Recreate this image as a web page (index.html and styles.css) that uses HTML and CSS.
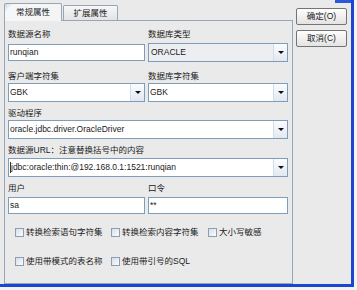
FILE: index.html
```html
<!DOCTYPE html>
<html>
<head>
<meta charset="utf-8">
<link rel="stylesheet" href="styles.css">
</head>
<body>
<div class="frame">
  <div class="edge"><span class="edge-blue"></span></div>
  <div class="main">
    <div class="tabs-area">
      <div class="tabs">
        <div class="tab active">常规属性</div>
        <div class="tab">扩展属性</div>
      </div>
      <div class="panel">
        <div class="pair lblrow m7"><span class="lbl">数据源名称</span><span class="lbl">数据库类型</span></div>
        <div class="pair ctlrow m3">
          <div class="input">runqian</div>
          <div class="select readonly"><span class="val">ORACLE</span><span class="drop"><i class="arrow"></i></span></div>
        </div>
        <div class="pair lblrow m8"><span class="lbl">客户端字符集</span><span class="lbl">数据库字符集</span></div>
        <div class="pair ctlrow m1">
          <div class="select"><span class="val">GBK</span><span class="drop"><i class="arrow"></i></span></div>
          <div class="select"><span class="val">GBK</span><span class="drop"><i class="arrow"></i></span></div>
        </div>
        <div class="lbl m5">驱动程序</div>
        <div class="select m1"><span class="val">oracle.jdbc.driver.OracleDriver</span><span class="drop"><i class="arrow"></i></span></div>
        <div class="lbl m5">数据源URL：注意替换括号中的内容</div>
        <div class="select m2"><span class="val"><span class="caret"></span>jdbc:oracle:thin:@192.168.0.1:1521:runqian</span><span class="drop"><i class="arrow"></i></span></div>
        <div class="pair lblrow m5"><span class="lbl">用户</span><span class="lbl">口令</span></div>
        <div class="pair m3">
          <div class="input">sa</div>
          <div class="input">**</div>
        </div>
        <div class="checks">
          <label class="check"><span class="box"></span>转换检索语句字符集</label>
          <label class="check"><span class="box"></span>转换检索内容字符集</label>
          <label class="check"><span class="box"></span>大小写敏感</label>
          <label class="check"><span class="box"></span>使用带模式的表名称</label>
          <label class="check"><span class="box"></span>使用带引号的SQL</label>
        </div>
      </div>
    </div>
    <div class="buttons">
      <div class="btn">确定(O)</div>
      <div class="btn">取消(C)</div>
    </div>
  </div>
</div>
</body>
</html>
```

FILE: styles.css
```css
html, body {
  margin: 0;
  padding: 0;
}
body {
  width: 357px;
  height: 290px;
  overflow: hidden;
  background: #f3f3f3;
  font-family: "Liberation Sans", "Noto Sans CJK SC", sans-serif;
  font-size: 8.5px;
  color: #1a1a1a;
}
.frame {
  width: 354px;
  height: 287px;
  box-sizing: border-box;
  border-right: 3px solid #1a46d2;
  border-bottom: 3px solid #1a46d2;
  background: #eaeaea;
  display: flex;
  flex-direction: column;
}
.edge {
  height: 3px;
  display: flex;
  justify-content: flex-end;
}
.edge-blue {
  width: 16px;
  background: #2a58d8;
}
.main {
  display: flex;
  flex: 1;
  min-height: 0;
}
.tabs-area {
  margin-left: 4px;
  width: 289px;
  display: flex;
  flex-direction: column;
}
.tabs {
  height: 17px;
  display: flex;
  align-items: flex-end;
}
.tab {
  height: 15px;
  width: 55px;
  margin-left: 1px;
  box-sizing: border-box;
  border: 1px solid #97a5b8;
  border-bottom: none;
  border-radius: 2px 2px 0 0;
  background: linear-gradient(#f7f7f7, #e3e3e3);
  text-align: center;
  line-height: 14px;
}
.tab.active {
  height: 18px;
  width: 58px;
  margin-left: 0;
  margin-bottom: -1px;
  background: linear-gradient(135deg, #c9d6ea 0, #f6f7f9 6px, #f4f4f4 100%);
  line-height: 16px;
  position: relative;
  z-index: 1;
}
.panel {
  height: 264px;
  box-sizing: border-box;
  border: 1px solid #97a5b8;
  padding: 0 4px 0 3px;
  display: flex;
  flex-direction: column;
}
.pair {
  display: grid;
  grid-template-columns: 137px 140px;
  column-gap: 3px;
}
.ctlrow {
  height: 19px;
  align-items: center;
}
.lbl {
  display: block;
  height: 12px;
  line-height: 12px;
  white-space: nowrap;
}
.m1 { margin-top: 1px; }
.m2 { margin-top: 2px; }
.m3 { margin-top: 3px; }
.m5 { margin-top: 5px; }
.m7 { margin-top: 7px; }
.m8 { margin-top: 8px; }
.input {
  height: 17px;
  box-sizing: border-box;
  border: 1px solid #7f9db9;
  background: #fff;
  line-height: 15px;
  padding-left: 1px;
  white-space: nowrap;
}
.select {
  height: 19px;
  box-sizing: border-box;
  border: 1px solid #7f9db9;
  background: #fff;
  display: flex;
}
.select.readonly {
  background: #eceef1;
}
.val {
  flex: 1;
  line-height: 17px;
  padding-left: 1px;
  white-space: nowrap;
  overflow: hidden;
  display: flex;
  align-items: center;
}
.readonly .val {
  padding-left: 2px;
}
.caret {
  width: 1px;
  height: 11px;
  background: #333;
  margin-right: 0;
}
.drop {
  width: 14px;
  box-sizing: border-box;
  border-left: 1px solid #d4dce8;
  background: linear-gradient(#fbfcfe, #e2e8f1);
  display: flex;
  align-items: center;
  justify-content: center;
}
.arrow {
  width: 0;
  height: 0;
  border-left: 3px solid transparent;
  border-right: 3px solid transparent;
  border-top: 3px solid #111;
}
.checks {
  margin-top: 12px;
  padding-left: 7px;
  display: grid;
  grid-template-columns: 96px 97px auto;
  grid-auto-rows: 12px;
  row-gap: 17px;
}
.check {
  display: flex;
  align-items: center;
  gap: 2px;
  line-height: 12px;
  white-space: nowrap;
}
.box {
  width: 9px;
  height: 9px;
  box-sizing: border-box;
  border: 1px solid #8c9db3;
  background: linear-gradient(135deg, #d6dee8, #fbfcfd);
}
.buttons {
  margin-left: 3px;
  padding-top: 5px;
  width: 51px;
  display: flex;
  flex-direction: column;
  gap: 5px;
}
.btn {
  height: 17px;
  box-sizing: border-box;
  border: 1px solid #747474;
  border-radius: 2px;
  background: linear-gradient(#fdfdfd, #e3e3e3);
  text-align: center;
  line-height: 15px;
  white-space: nowrap;
}
```
